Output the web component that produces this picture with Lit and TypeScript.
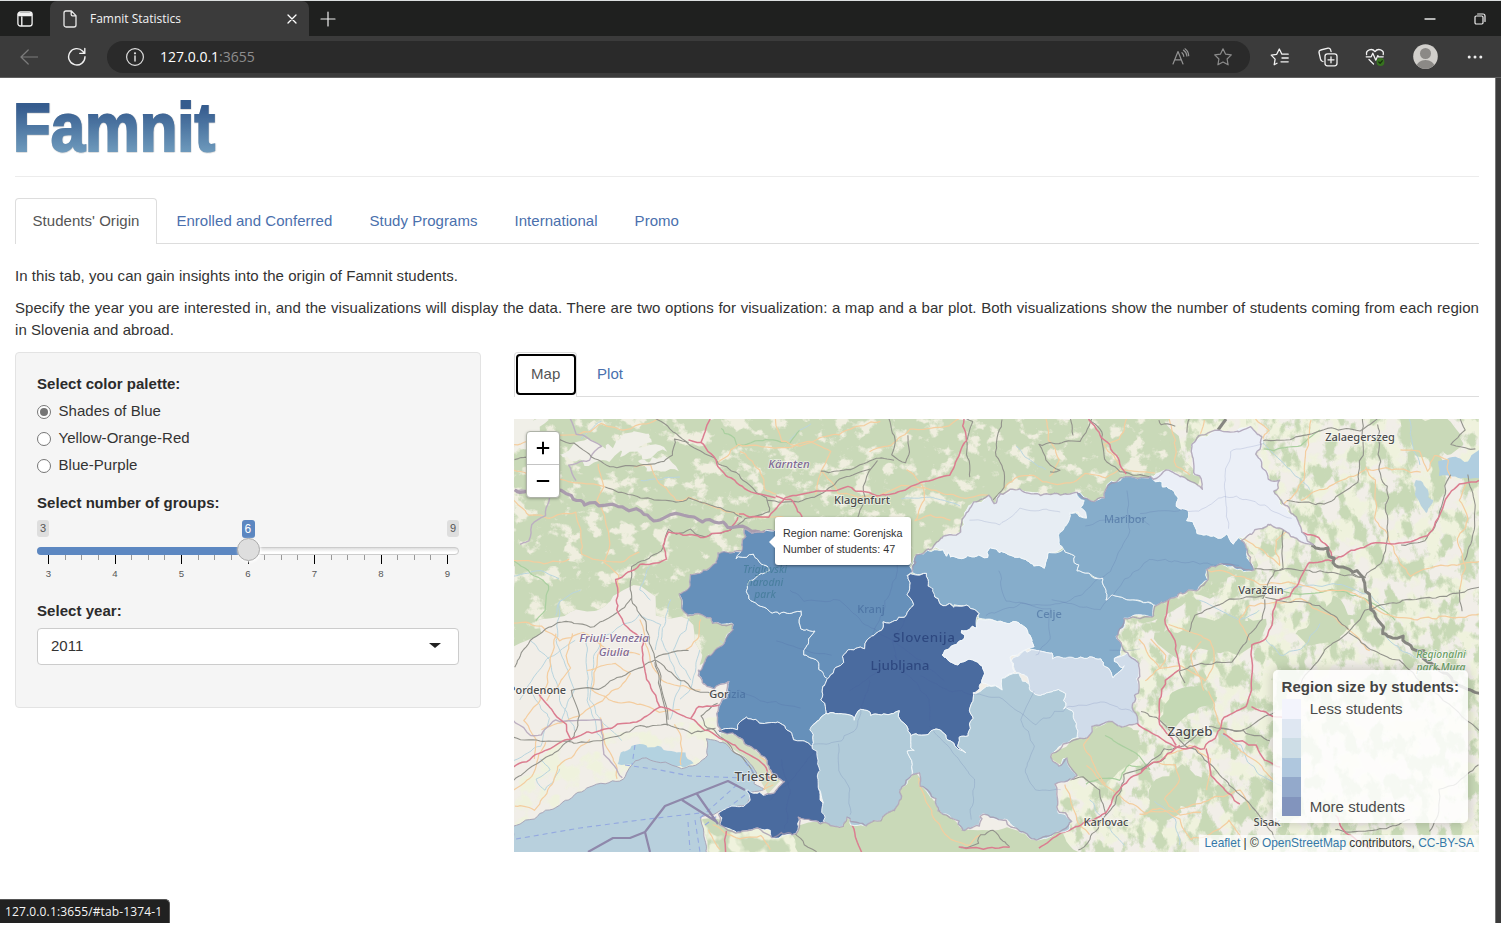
import { LitElement, html, svg, css } from "lit";
import { customElement, state } from "lit/decorators.js";

/* ---------- geometry helpers ---------- */
const hash = (x: number, y: number, s: number): number => {
  const v = Math.sin(x * 127.1 + y * 311.7 + s * 74.7) * 43758.5453;
  return (v - Math.floor(v)) * 2 - 1;
};
const noise = (x: number, y: number, cell: number, s: number): number => {
  const gx = x / cell, gy = y / cell, ix = Math.floor(gx), iy = Math.floor(gy);
  const fx = gx - ix, fy = gy - iy;
  const top = hash(ix, iy, s) * (1 - fx) + hash(ix + 1, iy, s) * fx;
  const low = hash(ix, iy + 1, s) * (1 - fx) + hash(ix + 1, iy + 1, s) * fx;
  return top * (1 - fy) + low * fy;
};
type P = [number, number];
const parse = (s: string): P[] =>
  s.trim().split(/\s+/).map((p) => p.split(",").map(Number) as P);

/* Subdivides a polyline and moves every vertex by a position-based offset, so shared borders stay shared. */
const roughen = (pts: P[], amp: number, cell: number, closed: boolean): string => {
  const out: string[] = [];
  const n = closed ? pts.length : pts.length - 1;
  const put = (x: number, y: number) =>
    out.push(`${(x + amp * noise(x, y, cell, 1)).toFixed(1)},${(y + amp * noise(x, y, cell, 2)).toFixed(1)}`);
  for (let i = 0; i < n; i++) {
    const a = pts[i], b = pts[(i + 1) % pts.length];
    const k = Math.max(1, Math.round(Math.hypot(b[0] - a[0], b[1] - a[1]) / (cell * 0.6)));
    for (let j = 0; j < k; j++) put(a[0] + ((b[0] - a[0]) * j) / k, a[1] + ((b[1] - a[1]) * j) / k);
  }
  if (!closed) put(pts[pts.length - 1][0], pts[pts.length - 1][1]);
  return out.join(" ");
};
const line = (d: string, amp = 2, cell = 6): string =>
  d.split("M").filter((s) => s.trim()).map((s) => "M" + roughen(parse(s), amp, cell, false)).join(" ");
const area = (pts: string, amp = 2, cell = 4): string => roughen(parse(pts), amp, cell, true);

/* ---------- region outlines ---------- */
interface Region { name: string; fill: string; pts: string; }

const REGIONS: Region[] = [
  { name: "Savinjska", fill: "#86adcb", pts: "912.7,573 913,562 916.7,555 924,553 935,550 943,550 946,555 949,552 951,558 968,556 986.7,556.7 990,548 998,551 1013,555 1022,559 1033,563 1033,566.7 1044,566.7 1047,558 1050,551.7 1063,550 1066,553 1076,555 1075,562 1080,565 1078,570 1088,574 1094,577 1103,579 1106,590 1107,599 1114,596 1133,600 1140,602 1148,603 1155,606 1151.7,618 1140,615 1125,616.7 1123,627 1116.7,637 1121,647 1121.7,654 1116,658 1117,665 1124,668 1113,677 1110,669 1103,666 1100,660 1080,658 1053,658 1051,653 1034,651 1028,647 1034,646.7 1030,635 1021.7,625 1003,621.7 980,620 980,613 970,606.7 940,604 933,596.7 927.3,586.7 926.7,574.3" },
  { name: "Koroška", fill: "#e7edf3", pts: "933,548 938,543 941.7,535 952,533 960,533 963,525 963,516.7 968,507 973,503 981,502 990,497 994,504 997,498 1001.7,493 1008,493 1020,489 1032,491 1040,495 1058,494 1076.7,491.7 1079,497 1085,501.7 1081,508 1085,512 1085,517 1077,513 1070,513 1069,521 1063,528 1060,536.7 1063,541 1060,549 1050,551.7 1047,558 1044,566.7 1033,566.7 1033,563 1022,559 1013,555 998,551 990,548 986.7,556.7 968,556 951,558 949,552 946,555 943,550" },
  { name: "Podravska", fill: "#86adcb", pts: "1076.7,491.7 1081,492 1090,501.7 1098,500 1104,497 1104,488 1112,482 1120,481 1126.7,476 1150,478 1155,478 1162,485 1170,489 1174,495 1178,497 1176.7,506.7 1188,511.7 1188,519 1194,524 1196.7,531.7 1205,534 1218,536.7 1222,539 1226,536 1233,543 1237,538 1243,540 1248,549 1248,558 1253,563 1254,570 1244,570 1235,568 1228,566 1221.7,563 1213,566 1206.7,568 1206,575 1209,580 1200,584 1195,590 1180,593 1166.7,600 1156.7,605 1148,603 1133,600 1114,596 1107,599 1106,590 1103,579 1088,574 1078,570 1080,565 1075,562 1076,555 1066,553 1063,550 1060,545 1060,536.7 1063,528 1069,521 1070,513 1085,517 1085,512 1081,508 1085,501.7 1079,497" },
  { name: "Pomurska", fill: "#ebeff7", pts: "1153,477 1158,472 1165,470 1174,472 1183,476 1190,482 1201.7,489 1200,477 1194,471 1191.7,466.7 1191.7,440 1206.7,436.7 1216.7,430 1225,431 1234,432 1241,427 1250,426.7 1261.7,436.7 1263,442 1256.7,453 1260,459 1260,466 1266,472 1269,479 1278,480 1276.7,488 1271.7,492 1283,506.7 1290,514 1296.7,518 1300,531.7 1311.7,543 1300,541.7 1286.7,531.7 1274,526 1266.7,523 1254,531 1243,538 1237,538 1233,543 1226,536 1222,539 1218,536.7 1205,534 1196.7,531.7 1194,524 1188,519 1188,511.7 1176.7,506.7 1178,497 1174,495 1170,489 1162,485" },
  { name: "Goriška", fill: "#6690ba", pts: "737,557 740,552 726.7,550.7 718,553 716.7,561.7 709,568 701.7,573 691.7,575 690.7,585 683,591 679,595 682,603 682.7,610 686.7,616.7 696.7,614 710,617 713,623 727,623 733.3,625 734,630 728,636 723,645 711.7,653 703,660 702.7,668 698.3,676 703.3,685 715,688 720,683 728.3,681.7 728.3,691.7 723,703 717,713 720,729 736.7,729 738,722 745,716.7 752,720 760,721.7 778,723 790,731.7 795,739 803,741 811.7,746.7 811.7,736.7 813,725 826,713 821.7,700 823,688 827,678 830,676 823,671.7 815,661 805,655 806,645 815,631.7 801,629 799,624 802,611.7 775,613 760,606.7 747,595 750,580 757,576 768,570 757,558 753,553 745,556" },
  { name: "Gorenjska", fill: "#6690ba", pts: "740,550 743,540 745,531 757,532 766,530 780,531 800,537 840,542 870,550 895,560 911,564 912.7,573 907,575 910,583 907,596 913,603 911.7,607 906,615 898,620 884,624 881.7,630 872,636 865,643 865,648 850,648 845,652 843,662 833,670 827,678 823,671.7 815,661 805,655 806,645 815,631.7 801,629 799,624 802,611.7 775,613 760,606.7 747,595 750,580 757,576 768,570 757,558 753,553 745,556 737,557" },
  { name: "Osrednjeslovenska", fill: "#4a6b9f", pts: "907,575 926.7,574.3 927.3,586.7 933,590 933,597 940,604 953,606 970,606.7 980,613 976.7,627 961.7,630 965,636.7 952,648 941.7,655 958.3,665 965,660 973.3,660 982.7,666.7 982.7,683 974,693 974,702 970.7,710 973.3,718 969,723 969.3,735 958.3,736 959.3,745 965,751.7 960,749 945,736.7 936,728.3 926.7,734 911.7,736 906.7,728 900,720 898,712 893,714 886.7,716 879,714 872,715 863.3,708.3 857,712 855,719.3 849,716 838.3,713.3 826,712.7 821.7,700 823,688 827,678 833,670 843,662 845,652 850,648 865,648 865,643 872,636 881.7,630 884,624 898,620 906,615 911.7,607 913,603 907,596 910,583" },
  { name: "Zasavska", fill: "#e9eef5", pts: "941.7,655 952,648 965,636.7 961.7,630 976.7,627 980,620.7 1003,621.7 1021.7,625 1030,635 1034,646.7 1028,648 1023,651.7 1012,657 1011.7,662 1014,671 1005,676 1000,688 990,685 982.7,683 982.7,666.7 973.3,660 965,660 958.3,665" },
  { name: "Posavska", fill: "#d0dcea", pts: "1012,660 1023,652 1034,651 1051,653 1053,658 1063,657 1080,658 1100,660 1103,666 1110,669 1113,677 1124,668 1117,665 1116,658 1126.7,653 1134,657 1140,661.7 1138,680 1137,695 1133,708 1136.7,721.7 1123,728 1111.7,721.7 1104,725 1092,728 1089,736 1076.7,736.7 1074,722 1073,710 1065,708 1065,695 1059,690 1053,690 1047,694 1040,697 1034,693 1028,684 1028,678 1015,671.7" },
  { name: "Primorsko-notranjska", fill: "#b1cbd9", pts: "826,713 838.3,713.3 849,716 855,719.3 857,712 863.3,708.3 872,715 879,714 886.7,716 893,714 898,712 900,720 906.7,728 911.7,736 910,743 913,752 907,752 911.7,763 911.7,775 907,783 900,790 900,805 881.7,818 865,826 852,824 846.7,818.3 843,826.7 825,824 820,813 824,800 819,786.7 815,760 811.7,746.7 811.7,726.7" },
  { name: "Jugovzhodna Slovenija", fill: "#b1cbd9", pts: "911.7,736 926.7,734 936,728.3 945,736.7 960,749 965,751.7 959.3,745 958.3,736 969.3,735 969,723 973.3,718 970.7,710 974,702 974,693 986.7,687 1000,688 1005,676 1016.7,673 1028,683 1034,693 1040,697 1047,694 1053,690 1059,690 1065,695 1065,708 1073,710 1074,722 1076.7,736.7 1066,743 1056.7,746.7 1049,756 1058,766 1063,760 1067,759 1071,768 1076.7,776.7 1067,781 1056.7,784 1057,806.7 1063,815 1073,821.7 1066,830 1056.7,831.7 1046,838 1036.7,840 1028,837 1016.7,830 1008,822 1000,820 991,817 983,811.7 980,818 978,826.7 961.7,830 956.7,820 946,813 936.7,810 936,798 927,793 920,785 919,773 912,774 911.7,763 907,752 913,752 910,743" },
  { name: "Obalno-kraška", fill: "#4a6b9f", pts: "720,729 736.7,729 738,722 745,716.7 752,720 760,721.7 778,723 790,731.7 795,739 803,741 811.7,746.7 815,752 818,757 818,773 820,790 823,806.7 825,822 810,820 800,816 797,824 796.7,831.7 788,835 778,838 769,836 770,830 760,828 751,830 740,833 730,828 721.7,828 720,816.7 716.7,811.7 733,808 745,806 750,799 746,791 766.7,796 775,793 783,781.7 770,770 766,760 753,748 736.7,735.7 720,733" },
];

const COUNTRY_BORDER = "M766,530 757,532 745,531 743,540 740,551 727,551 718,553 717,562 702,573 692,575 691,585 679,595 683,610 687,617 697,614 710,617 713,623 733,625 734,630 723,645 703,660 703,668 698,676 703,685 715,688 720,683 728,682 728,692 717,713 720,731 737,736 753,748 766,760 770,770 783,782 775,793 766,796 M717,812 722,828 740,833 760,828 770,836 797,832 800,816 825,824 843,827 847,818 865,826 882,818 900,805 900,790 912,774 919,773 920,785 936,798 937,810 957,820 962,830 978,827 983,812 1000,820 1017,830 1037,840 1057,832 1073,822 1057,807 1057,784 1077,777 1067,759 1058,766 1049,756 1066,743 1089,736 1092,728 1112,722 1123,728 1137,722 1133,708 1138,690 1140,662 1127,653 1121,647 1117,637 1125,617 1152,618 1157,605 1180,593 1195,590 1209,580 1207,568 1222,563 1254,570 1248,549 1243,540 1254,531 1267,523 1287,532 1300,542 1312,543 M933,548 942,535 960,533 963,517 973,503 990,497 994,504 1002,493 1020,489 1040,495 1077,492 1090,502 1104,497 1104,488 1127,476 1155,478 1165,470 1183,476 1202,489 1200,477 1192,467 1192,440 1217,430 1234,432 1250,427 1262,437 1257,453 1260,466 1269,479 1278,480 1277,488 1272,492 1297,518 1300,532 1312,543 M912,573 917,556 933,548";

const SEA = "514,827 533,818 563,803 587,787 605,783 623,780 630,770 634,761 645,758 653,760 665,763 680,769 693,767 708,757 707,738 723,742 747,760 757,772 754,783 766,790 750,793 750,803 733,808 717,812 700,817 703,832 708,855 510,855";
const LAGOON = "620,753 633,745 653,746 673,750 685,754 692,764 680,768 660,764 645,760 630,767 618,762";

/* ---------- line work ---------- */
const ORANGE = [
  "M514,444 540,440 575,434 590,432 600,424 620,430 640,425 660,420", "M514,500 530,515 550,518 575,512 580,530 582,555 600,560 620,562 640,552",
  "M598,465 600,480 603,487 597,500 605,515 610,545 604,562 620,575 618,592", "M514,470 545,478 575,483 605,487", "M633,467 650,465 656,480 675,500 690,497 720,510 740,515 765,518 790,517",
  "M718,462 740,444 775,448 790,447 810,440 830,452 818,478 815,495", "M775,419 780,440 800,446 820,437 840,433 870,422 880,421",
  "M740,450 760,470 765,490 775,493", "M820,472 830,480 838,492 860,497 880,495 900,485 920,488 940,492 965,498 990,495", "M905,468 920,480 925,500 915,520 930,516 950,520",
  "M870,450 890,446 910,430 950,425 958,419", "M1005,488 1015,478 1035,476 1050,484 1070,483 1085,475 1105,477 1120,470 1155,472", "M1045,419 1050,440 1060,460 1050,478", "M1128,419 1120,440 1105,445 1118,465",
  "M1170,419 1175,440 1176,466 1190,475", "M1205,419 1200,435", "M1255,419 1270,430 1262,440", "M1312,419 1308,440 1305,460 1303,480 1285,505", "M1300,500 1320,490 1345,480 1365,470 1385,468 1400,470 1420,472",
  "M1365,468 1375,480 1375,520 1385,530 1400,565 1410,575 1440,565 1479,562", "M1400,450 1420,452 1427,470 1435,455 1447,460 1450,480", "M1467,485 1460,500 1468,520 1458,540 1465,565 1460,590",
  "M1209,570 1230,573 1260,585 1290,582 1320,590 1350,592 1365,600 1385,615 1410,620 1479,615", "M1245,540 1262,550 1278,565 1275,540 1290,530", "M1170,625 1190,630 1210,640 1215,660 1205,680 1180,665 1160,670 1140,640",
  "M1250,640 1240,620 1250,605 1300,600 1330,615 1350,630 1370,650", "M1210,690 1215,710 1225,735 1240,750 1260,765 1275,780", "M1152,640 1165,655 1160,670 1145,680", "M1065,784 1070,800 1077,820 1090,835",
  "M917,778 925,800 935,820 950,840 970,845 980,835", "M1087,765 1095,775 1110,790 1125,800 1145,812 1175,812 1210,800 1240,790 1250,810", "M1090,730 1085,745 1097,770 1105,783",
  "M1140,815 1160,808 1180,820 1190,840 1210,835 1230,820 1245,845", "M555,633 548,680 540,700 525,720 535,740 535,760", "M573,633 567,655 570,668 555,690 547,700", "M600,640 592,690 610,700 640,705 660,712 680,710",
  "M514,622 540,625 560,640 582,633 610,651 640,655", "M600,718 605,740 615,765 617,778", "M587,670 615,663 630,675 610,695 580,715 540,730", "M700,620 697,640 685,650", "M675,725 682,740 680,765",
  "M514,805 535,810 548,790 560,765 590,740", "M545,742 530,780 514,790", "M708,830 720,850", "M712,826 740,840 760,835 770,850", "M640,620 650,660 660,680 700,690", "M514,560 545,563 570,560",
  "M1155,762 1175,765 1180,780 1165,800 1180,815 1200,812", "M1205,690 1190,655 1200,640", "M1140,770 1190,745 1210,760 1207,790", "M760,755 768,762 772,775 765,790 775,785",
];
const PINK = [
  "M710,419 703,435 700,443 690,440 M700,443 712,455 725,475 737,482 750,493 775,497", "M775,495 790,500 800,513 803,520",
  "M740,515 770,518 785,497 815,492 850,487 855,490 880,495 905,490 925,480 950,475 958,460 965,440 963,419", "M738,518 730,530 700,537 668,533 663,545 667,560 640,565 617,580 618,610 625,625 642,640 643,665 650,685 661,708",
  "M514,768 570,738 600,730 640,720 661,707 690,718 705,730 735,745 765,765 770,778", "M540,695 553,710 565,725 570,738", "M690,718 700,706 722,705", "M1090,419 1095,430 1110,445 1120,465 1127,475",
  "M1479,481 1460,485 1445,500 1440,515 1428,535 1410,540 1395,543 1370,543 1350,552 1335,560 1310,562 1300,580 1290,595 1275,600 1272,625 1265,640 1252,645 1252,690 1247,706 1225,717 1220,730 1205,748 1175,747 1155,735 1140,725 1135,721",
  "M1300,532 1318,537 1328,550 1335,560", "M1170,600 1165,620 1175,640 1180,670 1165,680 1160,700 1160,725 1175,745", "M1222,734 1235,740 1255,745 1265,760 1280,768", "M1207,748 1210,775 1240,805",
  "M1140,771 1165,757 1180,745", "M1146,768 1128,780 1112,800 1105,812 1085,823 1060,835 1040,848", "M853,822 857,840 862,852", "M958,848 980,849 1010,848", "M725,830 727,852",
  "M1335,815 1345,832 1370,850", "M1252,706 1270,715 1285,718",
];
const RAIL = [
  "M655,419 680,437 700,450 720,463 745,480 755,493 768,498 770,513 745,519 730,530 710,535 695,535 690,530 675,535 668,530 662,550 632,566 630,600 645,620 652,650 658,670 668,720",
  "M514,459 540,457 560,440 575,444 595,460 610,467 640,466 665,462 672,455 675,440 690,442", "M605,487 640,497 675,502 690,498 730,512 742,518", "M768,500 790,503 815,497 840,480 870,470",
  "M888,419 895,435 893,455 905,463 910,450 907,435", "M820,472 850,470 875,458 895,460", "M876,460 865,480 864,500 858,517", "M965,419 972,422 965,440 970,477", "M1003,419 995,452 1003,465 1005,487 993,500",
  "M1093,419 1080,440 1040,445 1045,460 1060,470 1050,473", "M1090,419 1103,435 1105,460 1120,472 1140,475 1190,480", "M1070,419 1073,435", "M1190,419 1188,432", "M1160,419 1162,425 1175,425",
  "M1263,442 1300,437 1330,428 1360,430 1372,422 1378,419", "M1378,424 1380,480 1387,487 1387,550 1380,565 1362,577 1350,573", "M1362,419 1362,455 1358,482 1340,495 1325,505 1287,501", "M1254,568 1320,572 1365,577",
  "M1283,515 1283,535 1282,568 1275,570 1265,590 1263,600", "M1479,587 1450,595 1410,600 1365,610 1350,632 1325,650 1310,670 1300,685 1285,690", "M1350,633 1380,655 1400,660 1425,685 1479,730",
  "M1265,595 1230,600 1195,615 1190,630", "M1265,598 1320,605 1350,630", "M1265,600 1263,620 1250,635 1240,650 1232,662 1190,665 1180,672 1185,682", "M1140,712 1158,718 1180,740 1200,755 1225,780 1260,815 1275,840",
  "M1210,727 1250,733 1270,740", "M1220,728 1240,732 1275,712", "M1140,770 1165,750 1185,745 1203,728", "M514,668 530,640 545,628 565,620 590,628 620,612 630,598", "M570,690 598,688 625,675 655,660", "M571,690 580,715 575,735 560,748 514,780",
  "M514,738 560,742 600,742 620,735 640,726 668,726 690,732 715,729", "M655,660 680,680 700,692 725,695", "M655,662 668,727", "M655,658 670,653 688,650", "M718,702 700,715 705,725 720,735 740,755 755,775",
  "M1053,780 1083,778 1100,790 1105,815", "M1105,815 1120,795 1125,775 1150,765 1165,758", "M1105,815 1095,830 1080,852", "M960,849 978,845 980,835 993,830 1010,847", "M795,833 805,845 815,852", "M1460,419 1465,430 1450,445 1475,450",
  "M1467,474 1475,500 1473,540 1465,560", "M1460,590 1462,610", "M1335,830 1355,832 1390,828 1410,820", "M1450,475 1445,490 1438,520 1425,540 1400,545", "M1479,765 1462,780 1440,790 1438,812 1430,832",
];
const STREAM = [
  "M622,740 600,720 590,700 593,660 600,640 640,615", "M530,640 550,660 560,700 575,730", "M670,600 660,640 680,680 670,720", "M514,760 540,745 550,720 530,690", "M700,650 690,690 680,700",
  "M1260,440 1290,470 1310,490", "M1280,590 1310,585 1340,585 1370,595 1385,610", "M1380,630 1400,650 1420,660", "M1220,735 1240,745 1250,765 1260,775 1280,785", "M1155,800 1175,820 1180,845",
  "M900,500 930,497 960,505", "M1015,447 1030,460 1045,470", "M790,440 800,430 810,425", "M1410,419 1412,450 1420,465", "M650,600 640,590 650,565", "M514,575 540,570 560,580", "M580,590 560,600 555,615",
  "M1265,640 1280,655 1300,650 1320,625", "M1090,800 1110,830 1125,845", "M640,480 680,478", "M720,640 740,650", "M600,420 580,440", "M1200,600 1240,620 1260,610",
  "M586,640 588,700 600,740", "M520,700 545,660 575,640", "M560,600 556,640 575,690 560,720", "M640,615 660,625 655,650", "M690,620 672,650 690,680", "M540,760 550,770 535,780 545,790 560,770",
];
const GREENLINE = [
  "M720,428 735,438 738,445 765,440 790,443 800,430", "M1105,735 1120,745 1140,755 1150,770 1130,765 1120,780 1100,777 1085,785", "M514,560 530,572 548,585 545,610 535,620", "M1262,585 1300,595 1330,590 1370,600 1395,620", "M1265,450 1300,445 1320,430",
];
const INNER = [
  "M790,590 805,600 840,600 860,620 890,640 920,660 945,680", "M775,640 800,650 830,655", "M740,690 760,700 800,708", "M900,560 890,590 880,620 870,640", "M985,615 1020,605 1060,605 1080,595 1110,570 1130,530 1127,490",
  "M1000,570 1005,600 1050,610 1050,640 1035,655", "M1085,525 1110,520 1130,515 1150,525", "M1050,600 1100,610 1125,580 1150,560 1240,565", "M970,520 1000,525 1020,508 1060,512", "M1140,515 1170,510 1200,512 1225,495 1265,505 1290,520",
  "M1228,530 1225,480 1230,450 1265,445", "M920,675 950,690 1000,697 1035,725 1065,708 1100,702 1133,712", "M850,690 880,670 895,660 892,640 905,620", "M893,655 905,670 930,700 930,720", "M812,745 840,742 855,730 870,680",
  "M838,745 838,770 850,790 850,815", "M1035,690 1020,720 1035,745 1025,770 1035,790 1060,790", "M930,728 960,760 975,780 970,820", "M780,760 790,790 785,830", "M770,800 800,770 815,750", "M1140,650 1110,650",
];
const FAINT_BORDER = [
  "M514,490 540,495 550,498 545,515 532,525 530,540 520,545", "M570,419 575,433 600,445 590,460 570,465 575,480", "M514,720 530,735 540,735 555,720 600,720 605,755 622,778",
];

const strokes = (cls: string, list: string[]) => svg`<g class=${cls}>${list.map((d) => svg`<path d=${line(d)}></path>`)}</g>`;

@customElement("region-map")
class RegionMap extends LitElement {
  static styles = css`
    :host { display: block; position: relative; height: 433px; font-family: "Liberation Sans", Arial, sans-serif; overflow: hidden; }
    svg.map { display: block; width: 100%; height: 100%; }
    .map path { fill: none; stroke-linejoin: round; }
    .orange path { stroke: #f4cd9f; stroke-width: 1.2; }
    .pink path { stroke: #db7d90; stroke-width: 1.5; }
    .rail path { stroke: #93938c; stroke-width: 1.1; }
    .stream path { stroke: #b9d5df; stroke-width: 1; }
    .greenline path { stroke: #a9cf9f; stroke-width: 1.2; }
    .inner path { stroke: #44549a; stroke-width: 0.9; opacity: 0.18; }
    .faint path { stroke: #bcafc1; stroke-width: 1.4; }
    .map path.thick { stroke: #aa9cae; stroke-width: 3.2; }
    .map path.dark { stroke: #868680; stroke-width: 3; }
    .map path.ferry { stroke: #94a9e0; stroke-width: 1.1; stroke-dasharray: 5 4; }
    .map path.seaLine { stroke: #8f88ab; stroke-width: 2.2; }
    .map path.country { stroke: #a294ab; stroke-width: 1.4; }
    .region { stroke: #f4f8fb; stroke-width: 0.9; stroke-linejoin: round; }
    .map text { font-family: "Noto Sans", sans-serif; text-anchor: middle; paint-order: stroke; stroke: #ffffffa0; stroke-width: 1.6px; fill: #4b4b4b; font-size: 11px; font-weight: 500; }
    .map text.big { font-size: 13.4px; }
    .map text.edge { font-size: 10.9px; }
    .map text.prov { font-style: italic; fill: #816b94; font-size: 11.5px; }
    .map text.park { font-style: italic; fill: #6b9e65; font-size: 10.3px; }
    .map text.under { stroke: none; fill: #385d92; opacity: 0.5; }
    .map text.deep { fill: #1c326c; opacity: 0.6; }
    .map text.parkUnder { fill: #2f6f86; opacity: 0.5; }
    .zoom { position: absolute; left: 12px; top: 12px; width: 34px; border: 1px solid #aeb2a8; border-radius: 4px; background: #fff; box-sizing: border-box; box-shadow: 0 1px 3px #0004; }
    .zoom div { height: 32px; display: grid; place-items: center; }
    .zoom div + div { border-top: 1px solid #c4c4c4; }
    .tip { position: absolute; left: 261px; top: 98px; width: 136px; height: 48px; box-sizing: border-box; padding: 8px 0 0 8px; background: #fff; border-radius: 3px; box-shadow: 0 1px 3px #0007; font-size: 10.8px; line-height: 16px; color: #333; white-space: nowrap; }
    .tip::before { content: ""; position: absolute; left: -6px; top: 19px; border: 6px solid transparent; border-left: 0; border-right-color: #fff; }
    .legend { position: absolute; right: 11px; bottom: 29px; width: 195px; height: 153px; box-sizing: border-box; padding: 6px 0 0 8.6px; background: #ffffffd4; border-radius: 5px; box-shadow: 0 0 12px #0003; color: #4b4b4b; font-size: 15px; line-height: 21px; }
    .legend b { display: block; color: #444; letter-spacing: 0.03px; white-space: nowrap; }
    .scale { display: flex; gap: 8.6px; margin-top: 2px; height: 117px; }
    .swatches { display: grid; width: 19.5px; grid-auto-rows: 1fr; }
    .names { display: flex; flex-direction: column; justify-content: space-between; margin: -1px 0; letter-spacing: 0.03px; }
    .s0 { background: #f3f4fc; } .s1 { background: #dfe7f2; } .s2 { background: #cddde6; } .s3 { background: #afc7de; } .s4 { background: #93a9cb; } .s5 { background: #8294bd; }
    .credit { position: absolute; right: 0; bottom: 0; height: 17px; padding: 0 5px; background: #ffffffb8; font-size: 11.92px; line-height: 17px; color: #333; white-space: nowrap; }
    .credit a { color: #3478a8; }
  `;

  render() {
    return html`
      <svg class="map" viewBox="514 419 965 433" preserveAspectRatio="none">
        <defs>
          <filter id="clearings" x="0" y="0" width="100%" height="100%" color-interpolation-filters="sRGB">
            <feTurbulence type="fractalNoise" baseFrequency="0.055 0.065" numOctaves="5" seed="12"></feTurbulence>
            <feColorMatrix values="0 0 0 0 0.938  0 0 0 0 0.935  0 0 0 0 0.875  8 0 0 0 -4.400"></feColorMatrix>
            <feComposite in2="SourceGraphic" operator="in"></feComposite>
          </filter>
          <filter id="woods" x="0" y="0" width="100%" height="100%" color-interpolation-filters="sRGB">
            <feTurbulence type="fractalNoise" baseFrequency="0.065 0.045" numOctaves="5" seed="31"></feTurbulence>
            <feColorMatrix values="0 0 0 0 0.785  0 0 0 0 0.85  0 0 0 0 0.715  8 0 0 0 -3.900"></feColorMatrix>
            <feComposite in2="SourceGraphic" operator="in"></feComposite>
          </filter>
          <filter id="fields" x="0" y="0" width="100%" height="100%" color-interpolation-filters="sRGB">
            <feTurbulence type="fractalNoise" baseFrequency="0.05" numOctaves="3" seed="7"></feTurbulence>
            <feColorMatrix values="0 0 0 0 0.937  0 0 0 0 0.95  0 0 0 0 0.865  0 8 0 0 -3.600"></feColorMatrix>
            <feComposite in2="SourceGraphic" operator="in"></feComposite>
          </filter>
        </defs>

        <rect x="514" y="419" width="965" height="433" fill="#f1eee8"></rect>
        <polygon points="1050,419 1479,419 1479,852 1050,852" filter="url(#fields)"></polygon>
        <polygon points=${area("514,790 560,740 620,735 720,720 720,760 620,790 514,840", 8, 14)} filter="url(#fields)"></polygon>
        <g>
          <polygon points=${area("510,415 1165,415 1200,490 1260,570 1140,620 740,650 708,655 700,640 690,628 660,612 640,590 615,588 600,605 575,615 545,622 514,648", 10, 14)} fill="#c9d9b8"></polygon>
          <polygon points=${area("510,415 1165,415 1200,490 1260,570 1140,620 740,650 708,655 700,640 690,628 660,612 640,590 615,588 600,605 575,615 545,622 514,648", 10, 14)} filter="url(#clearings)"></polygon>
        </g>
        <polygon points=${area("690,615 735,620 735,640 715,655 700,665 705,640", 3, 8)} fill="#c9d9b8"></polygon>
        <polygon points="1150,419 1479,419 1479,852 1060,852 1060,740 1120,620 1250,570 1200,490" filter="url(#woods)"></polygon>
        <polygon points=${area("708,855 700,816 760,826 830,822 915,772 960,828 1060,830 1080,855", 3, 8)} fill="#c9d9b8"></polygon>
        <polygon points=${area("708,855 700,816 760,826 790,830 800,855", 3, 8)} filter="url(#fields)"></polygon>
        <polygon points=${area("1049,756 1080,736 1112,722 1140,730 1138,758 1100,785 1078,776", 3, 8)} fill="#c9d9b8"></polygon>
        <polygon points=${area("1160,720 1172,690 1205,685 1217,698 1190,715 1175,726", 3, 6)} fill="#c4d8b4"></polygon>
        <polygon points=${area("1152,640 1190,622 1230,618 1265,622 1262,640 1240,652 1200,648 1165,652", 8, 9)} fill="#c9d9b8"></polygon>
        <polygon points=${area("1155,780 1180,765 1205,775 1195,805 1165,815 1150,800", 9, 8)} fill="#c9d9b8"></polygon>
        <polygon points=${area("1310,615 1335,600 1360,612 1350,630 1330,645 1300,635", 9, 8)} fill="#c9d9b8"></polygon>
        <polygon points=${area("1410,419 1450,419 1465,440 1450,455 1420,450 1408,435", 9, 8)} fill="#c9d9b8"></polygon>
        <polygon points="720,730 740,737 768,762 780,781 768,794 760,780 745,757 722,742" fill="#d5dfc4"></polygon>
        <polygon points=${area("560,452 590,440 610,448 625,430 655,432 640,445 665,450 645,460 620,452 600,465 580,462", 6, 6)} fill="#f0efe8"></polygon>
        <polygon points=${area("640,462 670,458 675,470 650,470", 4, 5)} fill="#f0efe8"></polygon>
        <polygon points=${area("514,419 545,419 540,440 525,450 514,452", 5, 6)} fill="#f0efe8"></polygon>
        ${strokes("stream", STREAM)}
        <polygon points=${area(LAGOON, 3, 5)} fill="#b3d2e0"></polygon>
        <polygon points=${area(SEA, 2, 6)} fill="#b8d0dd" stroke="#a9a6b8" stroke-width="1"></polygon>
        <polygon points=${area("1438,460 1455,457 1465,462 1479,450 1482,478 1440,476", 2, 5)} fill="#b0cee0"></polygon>
        <polygon points=${area("1414,480 1425,485 1432,500 1424,512 1418,500", 3, 5)} fill="#b9d3de"></polygon>
        ${strokes("greenline", GREENLINE)}
        ${strokes("orange", ORANGE)}
        ${strokes("faint", FAINT_BORDER)}
        ${strokes("rail", RAIL)}
        ${strokes("pink", PINK)}
        <path class="thick" d=${line("M514,488 530,492 560,492 575,502 605,505 635,510 655,520 675,515 700,520 725,524 745,530 780,532", 4, 7)}></path>
        <path class="dark" d=${line("M1311,543 1325,548 1335,563 1358,572 1366,583 1370,605 1382,630 1400,640 1420,650 1426,660 1440,670 1470,692 1482,695", 4, 5)}></path>
        <path class="dark" d="M1226,419 1218,430"></path>
        <path class="ferry" d="M516,839 580,828 640,820 700,813 M625,765 660,770 690,776 745,778 M635,745 632,765 M745,762 760,780 M695,820 700,852 M688,822 690,850 M700,818 740,782 M705,825 745,795"></path>
        <path class="seaLine" d="M588,852 613,838 630,838 645,832 665,806 700,792 728,781 745,790 M645,832 650,852 M682,800 717,822 M697,794 718,824"></path>

        ${REGIONS.map((r) => svg`<polygon class="region" points=${area(r.pts, 2.4, 4)} fill=${r.fill}></polygon>`)}
        <path class="country" d=${line(COUNTRY_BORDER, 2.4, 4)} opacity="0.75"></path>
        ${strokes("inner", INNER)}

        <text class="prov" x="789" y="467.500">Kärnten</text>
        <text x="862" y="504">Klagenfurt</text>
        <text x="1360" y="441">Zalaegerszeg</text>
        <text x="1261" y="594">Varaždin</text>
        <text class="prov" x="614" y="641.500">Friuli-Venezia</text>
        <text class="prov" x="614" y="656">Giulia</text>
        <text class="edge" x="537.500" y="694">Pordenone</text>
        <text x="719" y="698">Gor</text>
        <text class="under" x="737" y="698">izia</text>
        <text class="big" x="756" y="781">Trieste</text>
        <text class="big" x="1190" y="736">Zagreb</text>
        <text x="1106" y="825.500">Karlovac</text>
        <text x="1267" y="826">Sisak</text>
        <text class="park" x="1441" y="658">Regionalni</text>
        <text class="park" x="1441" y="671">park Mura</text>
        <text class="under" x="1125" y="523">Maribor</text>
        <text class="under" x="871" y="613">Kranj</text>
        <text class="under" x="1049" y="618">Celje</text>
        <text class="big under deep" x="924" y="642" textLength="62">Slovenija</text>
        <text class="big under deep" x="900" y="670" textLength="59">Ljubljana</text>
        <text class="park under parkUnder" x="765" y="573">Triglavski</text>
        <text class="park under parkUnder" x="765" y="586">narodni</text>
        <text class="park under parkUnder" x="765" y="598">park</text>
      </svg>

      <div class="zoom">
        <div><svg width="14" height="14" viewBox="0 0 14 14"><path d="M7 .8v12.400M.8 7h12.400" stroke="#000" stroke-width="2"></path></svg></div>
        <div><svg width="14" height="14" viewBox="0 0 14 14"><path d="M.8 7h12.400" stroke="#000" stroke-width="2"></path></svg></div>
      </div>
      <div class="tip">Region name: Gorenjska<br>Number of students: 47</div>
      <div class="legend">
        <b>Region size by students:</b>
        <div class="scale">
          <div class="swatches">${[0, 1, 2, 3, 4, 5].map((i) => html`<i class="s${i}"></i>`)}</div>
          <div class="names"><span>Less students</span><span>More students</span></div>
        </div>
      </div>
      <div class="credit"><a>Leaflet</a> | © <a>OpenStreetMap</a> contributors, <a>CC-BY-SA</a></div>
    `;
  }
}

@customElement("edge-chrome")
class EdgeChrome extends LitElement {
  static styles = css`
    :host { display: block; font-family: "Open Sans", "Noto Sans", sans-serif; color: #fff; }
    svg { display: block; fill: none; stroke-linecap: round; stroke-linejoin: round; }
    .strip { height: 36px; border-top: 1px solid #dcdfdf; box-sizing: border-box; background: #1f201f; display: flex; align-items: stretch; }
    .ws { width: 50px; display: grid; place-items: center; }
    .tab { width: 259px; box-sizing: border-box; background: #3b3b3b; border-radius: 7px 7px 0 0; display: flex; align-items: center; padding: 0 11px 0 13px; }
    .title { margin-left: 12px; font-size: 12px; flex: 1; white-space: nowrap; color: #f3f3f3; padding-top: 1px; }
    .new { width: 38px; display: grid; place-items: center; }
    .win { margin-left: auto; display: flex; align-items: center; gap: 38px; padding-right: 15px; }
    .bar { height: 42px; box-sizing: border-box; border-bottom: 1px solid #606060; background: #3b3b3b; display: flex; align-items: center; padding-left: 20px; }
    .reload { margin-left: 29px; }
    .address { margin-left: 21px; width: 1143px; height: 32px; box-sizing: border-box; border-radius: 16px; background: #2a2a2a; display: flex; align-items: center; padding: 0 17px 0 18px; }
    .url { margin-left: 15px; flex: 1; font-size: 14px; color: #fff; }
    .url span { color: #8e8e8e; }
    .address .star { margin-left: 23px; }
    .tools { flex: 1; display: flex; align-items: center; justify-content: space-between; padding: 0 18px 0 20px; }
    .face { margin-right: 2px; }
  `;
  render() {
    return html`
      <div class="strip">
        <div class="ws"><svg width="16" height="16" viewBox="0 0 16 16" stroke="#f2f2f2" stroke-width="1.300"><rect x=".9" y="1" width="14.200" height="14" rx="2.600"></rect><path d="M1.400 3.400h13.200M4.800 6v8.600" stroke-width="1.400"></path><path d="M1.600 2.600h12.800v2H1.600z" fill="#f2f2f2"></path></svg></div>
        <div class="tab">
          <svg width="15" height="18" viewBox="0 0 15 18" stroke="#e9e9e9" stroke-width="1.300"><path d="M3 1h5.400L13 5.600V15a2 2 0 0 1-2 2H3a2 2 0 0 1-2-2V3a2 2 0 0 1 2-2zM8.200 1.200V4.500a1.300 1.300 0 0 0 1.300 1.300H12.800"></path></svg>
          <span class="title">Famnit Statistics</span>
          <svg width="12" height="12" viewBox="0 0 12 12" stroke="#fff" stroke-width="1.300"><path d="M2 2l8 8M10 2l-8 8"></path></svg>
        </div>
        <div class="new"><svg width="16" height="16" viewBox="0 0 16 16" stroke="#eee" stroke-width="1.200"><path d="M8 1v14M1 8h14"></path></svg></div>
        <div class="win">
          <svg width="12" height="12" viewBox="0 0 12 12" stroke="#e8e8e8" stroke-width="1.300"><path d="M1 6h10"></path></svg>
          <svg width="12" height="12" viewBox="0 0 12 12" stroke="#eee" stroke-width="1.200"><rect x="1" y="3" width="8" height="8" rx="1.200"></rect><path d="M3.600 1H9a2 2 0 0 1 2 2v5.400"></path></svg>
        </div>
      </div>
      <div class="bar">
        <svg width="18" height="16" viewBox="0 0 18 16" stroke="#7c7c7c" stroke-width="1.200"><path d="M17.500 8H1M8.200 1L1 8l7.200 7"></path></svg>
        <svg class="reload" width="19" height="19" viewBox="0 0 19 19" stroke="#f0f0f0" stroke-width="1.400"><path d="M18 9.800A8.200 8.200 0 1 1 15.800 4.200L17.400 6.200M17.800 1.400v5h-5"></path></svg>
        <div class="address">
          <svg width="20" height="20" viewBox="0 0 20 20" stroke="#dedede" stroke-width="1.200"><circle cx="10" cy="10" r="8.400"></circle><path d="M10 9v5" stroke-width="1.500"></path><circle cx="10" cy="6.300" r=".5" fill="#eee"></circle></svg>
          <div class="url">127.0.0.1<span>:3655</span></div>
          <svg width="18" height="18" viewBox="0 0 18 18" stroke="#949494" stroke-width="1.200"><path d="M1 16L6 3.500l5 12.500M2.800 11.800h6.500M10 4.700c1.100.9 1.700 2.100 1.800 3.600M11.500 2.200c2.200 1.500 3.300 3.400 3.400 5.900M13 .8c2.300 1.600 3.500 3.900 3.700 6.800"></path></svg>
          <svg class="star" width="20" height="20" viewBox="0 0 20 20" stroke="#8c8c8c" stroke-width="1.200"><path d="M10 1.800l2.500 5.300 5.800.8-4.200 4.100 1 5.800-5.100-2.800-5.100 2.800 1-5.800L1.700 7.900l5.800-.8z"></path></svg>
        </div>
        <div class="tools">
          <svg width="20" height="20" viewBox="0 0 20 20" stroke="#f2f2f2" stroke-width="1.300"><path d="M7 16.300L4.200 17.800l.9-5.700L1.200 8.100l5.500-.8L9.300 2l2.600 5.200h6.300M12 11h6.200M11 14.800h7.200"></path></svg>
          <svg width="20" height="20" viewBox="0 0 20 20" stroke="#f2f2f2" stroke-width="1.300"><rect x="7" y="6.800" width="12" height="12" rx="2.500"></rect><path d="M13 9.800v6M10 12.800h6M5 14.500L3.800 14C3 13.500 2.800 13 2.500 12L1 5.500C.8 4 1.300 3.300 2.700 3L10 1.200c1.400-.2 2.200.3 2.600 1.600l.5 1.800"></path></svg>
          <svg width="20" height="20" viewBox="0 0 20 20" stroke="#f2f2f2" stroke-width="1.300"><path d="M1.600 7.600C.6 3 7 .6 10 4.600c3-4 9.400-1.600 8.200 3M1.200 9.800h5l1.600-3.600 3 7 2-4.600.8 1.200h4.600M4 12.500l4.500 4.500"></path><circle cx="15.500" cy="15" r="3.900" fill="#37731f" stroke="none"></circle><path d="M13.800 15l1.300 1.200 2.200-2.500" stroke="#17330e"></path></svg>
          <svg class="face" width="25" height="25" viewBox="0 0 25 25"><clipPath id="face"><circle cx="12.500" cy="12.500" r="12.300"></circle></clipPath><g clip-path="url(#face)"><rect width="25" height="25" fill="#d1cfcb"></rect><circle cx="12.500" cy="9.500" r="5.500" fill="#8b8986"></circle><ellipse cx="12.500" cy="22.500" rx="9" ry="6.500" fill="#8b8986"></ellipse></g></svg>
          <svg width="16" height="6" viewBox="0 0 16 6"><circle cx="2.200" cy="3" r="1.500" fill="#eee"></circle><circle cx="8" cy="3" r="1.500" fill="#eee"></circle><circle cx="13.800" cy="3" r="1.500" fill="#eee"></circle></svg>
        </div>
      </div>
    `;
  }
}

@customElement("filter-panel")
class FilterPanel extends LitElement {
  static styles = css`
    :host { display: block; width: 466px; height: 356px; box-sizing: border-box; padding: 20px 21px; border: 1px solid #e3e3e3; border-radius: 4px; background: #f5f5f5; font-size: 15px; line-height: 21.400px; color: #333; }
    b { display: block; letter-spacing: 0.040px; color: #2b2b2b; }
    .opts { padding-top: 2.500px; }
    .opt { display: flex; align-items: center; gap: 7.500px; height: 27.200px; letter-spacing: 0.050px; }
    .dot { width: 14px; height: 14px; box-sizing: border-box; border: 1px solid #767676; border-radius: 50%; background: #fff; display: grid; place-items: center; margin-top: 2px; }
    .on::after { content: ""; width: 8.400px; height: 8.400px; border-radius: 50%; background: #757575; }
    .groups { margin-top: 13.500px; }
    .bubbles { display: flex; justify-content: space-between; margin-top: 6.500px; height: 27px; align-items: flex-start; font-size: 11px; line-height: 16px; color: #555; }
    .bubbles span { padding: 0 3px; min-width: 6px; background: #dedede; border-radius: 3px; height: 17px; }
    .bubbles .cur { background: #5c87c1; color: #fff; font-size: 12px; height: 18px; line-height: 18px; min-width: 7px; }
    .track { position: relative; height: 8px; box-sizing: border-box; border: 1px solid #ccc; border-radius: 8px; background: linear-gradient(#dedede, #fff 70%); }
    .fill { height: 8px; width: 211px; margin: -1px; background: #5c87c1; border-radius: 8px 0 0 8px; }
    .knob { position: absolute; left: 199px; top: -10px; width: 23px; height: 23px; box-sizing: border-box; border: 1px solid #ababab; border-radius: 50%; background: #dedede; box-shadow: 1px 1px 3px #fff; }
    .ticks { display: flex; justify-content: space-between; margin: 0 11px; height: 9px; }
    .ticks i { width: 1px; height: 5px; background: #999; }
    .ticks .major { height: 9px; background: #000; }
    .nums { display: flex; justify-content: space-between; margin: 4px 8.500px 0; font-size: 9.600px; line-height: 12px; color: #555; }
    .nums span { width: 6px; text-align: center; }
    .year { margin-top: 20px; }
    .select { margin-top: 6.500px; height: 37px; box-sizing: border-box; border: 1px solid #ccc; border-radius: 4px; background: #fff; display: flex; align-items: center; justify-content: space-between; padding: 0 17.500px 2px 13px; }
    .caret { border: 6px solid transparent; border-top: 5.500px solid #222; border-bottom: 0; }
  `;
  @state() private palette = 0;
  render() {
    const names = ["Shades of Blue", "Yellow-Orange-Red", "Blue-Purple"];
    return html`
      <b>Select color palette:</b>
      <div class="opts">${names.map((n, i) => html`<div class="opt" @click=${() => (this.palette = i)}><i class="dot ${i === this.palette ? "on" : ""}"></i>${n}</div>`)}</div>
      <b class="groups">Select number of groups:</b>
      <div class="bubbles"><span>3</span><span class="cur">6</span><span>9</span></div>
      <div class="track"><div class="fill"></div><div class="knob"></div></div>
      <div class="ticks">${Array.from({ length: 25 }, (_, i) => html`<i class=${i % 4 ? "" : "major"}></i>`)}</div>
      <div class="nums">${[3, 4, 5, 6, 7, 8, 9].map((n) => html`<span>${n}</span>`)}</div>
      <b class="year">Select year:</b>
      <div class="select">2011<i class="caret"></i></div>
    `;
  }
}

@customElement("app-root")
class AppRoot extends LitElement {
  static styles = css`
    :host { display: block; position: relative; width: 1501px; height: 925px; overflow: hidden; background: #fff; font-family: "Liberation Sans", Arial, sans-serif; font-size: 15px; line-height: 21.400px; color: #333; }
    .body { background: #3b3b3b; width: 1501px; height: 845px; }
    .page { height: 845px; width: 1496px; box-sizing: border-box; border-right: 1px solid #777; padding: 15px 16px 0 15px; background: #fff; }
    .logo { display: block; width: 210px; height: 68px; overflow: visible; }
    .logo text { font-family: "Liberation Sans", Arial, sans-serif; font-weight: 700; font-size: 69px; stroke-width: 2; paint-order: stroke; }
    .rule { height: 1px; background: #ececec; margin: 15px 0 21px; }
    .tabs { display: flex; height: 46px; box-sizing: border-box; border-bottom: 1px solid #ddd; letter-spacing: 0.040px; color: #4a70ad; }
    .tabs span { box-sizing: border-box; height: 46px; padding: 12px 17px 0; margin-right: 3px; border: 0 solid transparent; white-space: nowrap; }
    .tabs .active { border: 1px solid #ddd; border-bottom: 0; border-radius: 4px 4px 0 0; background: #fff; color: #555; padding: 11px 16.500px 0 16.500px; margin-right: 2.500px; }
    .intro { margin: 21px 0 11px; letter-spacing: 0.050px; }
    .more { margin: 0 0 12px; text-align: justify; letter-spacing: 0.060px; }
    .cols { display: flex; gap: 33px; }
    .right { flex: 1; }
    .right .tabs { height: 45px; margin-bottom: 22px; }
    .right .tabs span { padding-top: 11px; }
    .right .tabs .active { position: relative; height: 45px; width: 63px; padding: 10px 0 0 16px; margin-right: 3px; }
    .ring { position: absolute; left: 1px; top: 1px; width: 60px; height: 41px; box-sizing: border-box; border: 2px solid #000; border-radius: 4px; }
    .status { position: absolute; left: 0; bottom: 2px; height: 24px; width: 170px; box-sizing: border-box; padding-left: 5px; border: 1px solid #555; border-left: 0; border-bottom: 0; border-radius: 0 5px 0 0; background: #212121; color: #f5f5f5; font-family: "Open Sans", "Noto Sans", sans-serif; font-size: 12px; line-height: 24px; letter-spacing: 0.140px; white-space: nowrap; }
  `;
  render() {
    return html`
      <edge-chrome></edge-chrome>
      <div class="body"><div class="page">
        <svg class="logo" viewBox="0 0 210 68">
          <defs>
            <linearGradient id="ink" gradientUnits="userSpaceOnUse" x1="0" y1="8" x2="0" y2="60"><stop offset="0.100" stop-color="#355b8e"></stop><stop offset="1" stop-color="#6f9bbd"></stop></linearGradient>
            <filter id="sh" x="-5%" y="-10%" width="110%" height="120%"><feDropShadow dx="0.200" dy="0.300" stdDeviation="0.600" flood-color="#333" flood-opacity="0.500"></feDropShadow></filter>
          </defs>
          <text x="-2" y="57.500" textLength="202" lengthAdjust="spacingAndGlyphs" fill="url(#ink)" stroke="url(#ink)" filter="url(#sh)">Famnit</text>
        </svg>
        <div class="rule"></div>
        <div class="tabs"><span class="active">Students' Origin</span><span>Enrolled and Conferred</span><span>Study Programs</span><span>International</span><span>Promo</span></div>
        <p class="intro">In this tab, you can gain insights into the origin of Famnit students.</p>
        <p class="more">Specify the year you are interested in, and the visualizations will display the data. There are two options for visualization: a map and a bar plot. Both visualizations show the number of students coming from each region in Slovenia and abroad.</p>
        <div class="cols">
          <filter-panel></filter-panel>
          <div class="right">
            <div class="tabs"><span class="active">Map<i class="ring"></i></span><span>Plot</span></div>
            <region-map></region-map>
          </div>
        </div>
      </div></div>
      <div class="status">127.0.0.1:3655/#tab-1374-1</div>
    `;
  }
}
